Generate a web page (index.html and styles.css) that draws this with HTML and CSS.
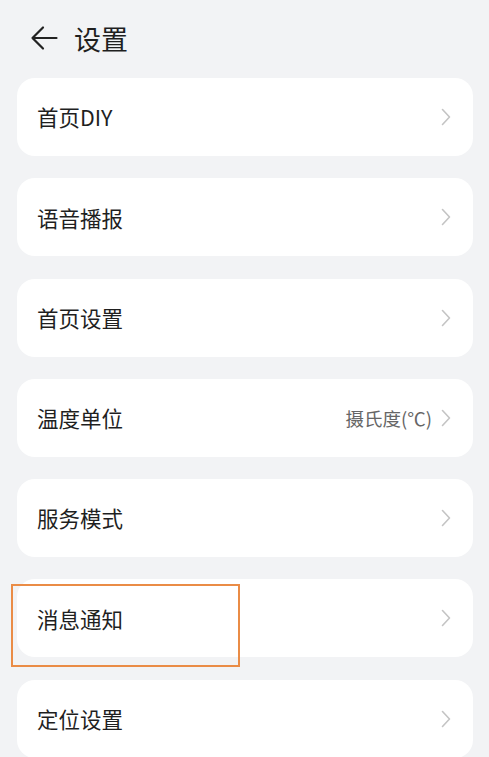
FILE: index.html
```html
<!DOCTYPE html>
<html lang="zh">
<head>
<meta charset="utf-8">
<link rel="stylesheet" href="styles.css">
</head>
<body>
<div class="page">
  <header class="header">
    <svg class="back" width="28" height="26" viewBox="0 0 28 26">
      <path d="M26.5 13H2.5M13 2.5L2.5 13 13 23.5" fill="none" stroke="#222" stroke-width="2.2" stroke-linecap="round" stroke-linejoin="round"/>
    </svg>
    <h1 class="title">设置</h1>
  </header>
  <ul class="list">
    <li class="card"><span class="label">首页DIY</span><span class="right"><svg class="chev" width="10" height="18" viewBox="0 0 10 18"><path d="M1.5 1.5L8.5 9l-7 7.5" fill="none" stroke="#c4c4c4" stroke-width="1.6" stroke-linecap="round" stroke-linejoin="round"/></svg></span></li>
    <li class="card"><span class="label">语音播报</span><span class="right"><svg class="chev" width="10" height="18" viewBox="0 0 10 18"><path d="M1.5 1.5L8.5 9l-7 7.5" fill="none" stroke="#c4c4c4" stroke-width="1.6" stroke-linecap="round" stroke-linejoin="round"/></svg></span></li>
    <li class="card"><span class="label">首页设置</span><span class="right"><svg class="chev" width="10" height="18" viewBox="0 0 10 18"><path d="M1.5 1.5L8.5 9l-7 7.5" fill="none" stroke="#c4c4c4" stroke-width="1.6" stroke-linecap="round" stroke-linejoin="round"/></svg></span></li>
    <li class="card"><span class="label">温度单位</span><span class="right"><span class="value">摄氏度(℃)</span><svg class="chev" width="10" height="18" viewBox="0 0 10 18"><path d="M1.5 1.5L8.5 9l-7 7.5" fill="none" stroke="#c4c4c4" stroke-width="1.6" stroke-linecap="round" stroke-linejoin="round"/></svg></span></li>
    <li class="card"><span class="label">服务模式</span><span class="right"><svg class="chev" width="10" height="18" viewBox="0 0 10 18"><path d="M1.5 1.5L8.5 9l-7 7.5" fill="none" stroke="#c4c4c4" stroke-width="1.6" stroke-linecap="round" stroke-linejoin="round"/></svg></span></li>
    <li class="card highlighted"><span class="label">消息通知</span><span class="right"><svg class="chev" width="10" height="18" viewBox="0 0 10 18"><path d="M1.5 1.5L8.5 9l-7 7.5" fill="none" stroke="#c4c4c4" stroke-width="1.6" stroke-linecap="round" stroke-linejoin="round"/></svg></span><span class="mark"></span></li>
    <li class="card"><span class="label">定位设置</span><span class="right"><svg class="chev" width="10" height="18" viewBox="0 0 10 18"><path d="M1.5 1.5L8.5 9l-7 7.5" fill="none" stroke="#c4c4c4" stroke-width="1.6" stroke-linecap="round" stroke-linejoin="round"/></svg></span></li>
  </ul>
</div>
</body>
</html>
```
FILE: styles.css
```css
html, body {
  margin: 0;
  padding: 0;
  background: #f2f3f5;
  font-family: "Noto Sans CJK SC", "Noto Sans", sans-serif;
  color: #1f1f1f;
  overflow: hidden;
}
.page {
  width: 489px;
  height: 757px;
  padding: 0 16px 0 17px;
  box-sizing: border-box;
}
.header {
  height: 78px;
  display: flex;
  align-items: center;
  padding-left: 13px;
  padding-bottom: 2px;
  box-sizing: border-box;
}
.back {
  display: block;
  margin-right: 16px;
}
.title {
  margin: 0;
  font-size: 27px;
  font-weight: 400;
  line-height: 1;
  color: #1f1f1f;
}
.list {
  list-style: none;
  margin: 0;
  padding: 0;
  display: flex;
  flex-direction: column;
  gap: 22.3px;
}
.card {
  position: relative;
  height: 78px;
  background: #ffffff;
  border-radius: 18px;
  display: flex;
  align-items: center;
  justify-content: space-between;
  padding: 0 22px 0 20px;
  box-sizing: border-box;
}
.label {
  font-size: 21.5px;
  line-height: 1;
  color: #1f1f1f;
}
.right {
  display: flex;
  align-items: center;
  gap: 9px;
}
.value {
  font-size: 18.5px;
  color: #666666;
  line-height: 1;
}
.chev {
  display: block;
}
.mark {
  position: absolute;
  left: -6px;
  top: 5px;
  width: 229px;
  height: 83px;
  border: 2px solid #ea8c46;
  box-sizing: border-box;
}
```
